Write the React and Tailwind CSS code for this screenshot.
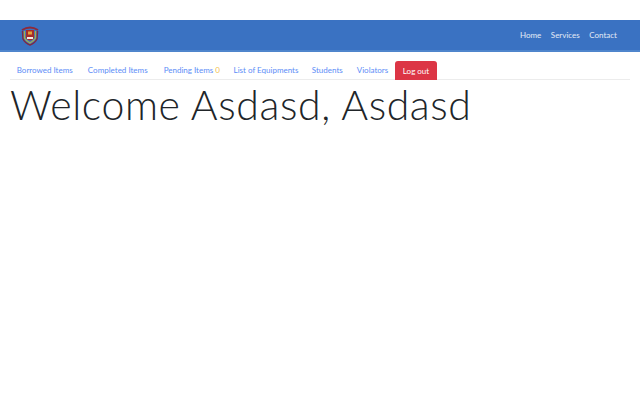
import React from "react";

const tabs = [
  { label: "Borrowed Items", width: "w-[69.5px]" },
  { label: "Completed Items", width: "w-[76.5px]" },
  { label: "Pending Items", width: "w-[71.5px]", count: "0" },
  { label: "List of Equipments", width: "w-[77px]" },
  { label: "Students", width: "w-[45.5px]" },
  { label: "Violators", width: "w-[45px]" },
];

const Crest = () => (
  <svg width="18" height="21" viewBox="0 0 18 21" className="block">
    <path d="M1 5 Q9 0 17 5" fill="none" stroke="#8f2a3a" strokeWidth="2" />
    <path d="M1.5 6 L2 14 Q4 18 9 20 Q14 18 16 14 L16.5 6" fill="none" stroke="#7d2a45" strokeWidth="1.5" />
    <path d="M3.5 6 L3.5 13 Q5 16 9 18 Q13 16 14.5 13 L14.5 6" fill="none" stroke="#a7b04a" strokeWidth="1.3" />
    <path d="M5 5 L13 5 L13 13 Q11 15.5 9 15.5 Q7 15.5 5 13 Z" fill="#a52c2c" />
    <rect x="7" y="6.5" width="4" height="3" fill="#e0a33a" />
    <rect x="6" y="12" width="6" height="2" fill="#f4ece2" />
  </svg>
);

export default function App() {
  return (
    <div className="min-h-screen bg-white pt-5 font-['Lato',sans-serif]">
      <nav className="flex h-8 items-center justify-between border-b-2 border-[#4f85cc] bg-[#3a72c2] pl-[21px] pr-[23px]">
        <Crest />
        <div className="flex gap-[9.5px] text-[8px] text-[#e3ebf6]">
          <a>Home</a>
          <a>Services</a>
          <a>Contact</a>
        </div>
      </nav>

      <div className="px-2.5 pt-[9px]">
        <div className="flex h-[19px] items-stretch border-b border-[#ececec] text-[8px] text-[#5c8df7]">
          {tabs.map((tab) => (
            <a key={tab.label} className={`flex items-center justify-center whitespace-nowrap ${tab.width}`}>
              {tab.label}
              {tab.count && <span className="ml-[2px] text-[#f2c14e]">{tab.count}</span>}
            </a>
          ))}
          <a className="flex h-[19px] w-[42px] items-center justify-center rounded-t-[3px] bg-[#dc3545] text-white">Log out</a>
        </div>
        <h1 className="text-[41px] leading-[49px] font-light tracking-[0.6px] text-[#212529]">Welcome Asdasd, Asdasd</h1>
      </div>
    </div>
  );
}
